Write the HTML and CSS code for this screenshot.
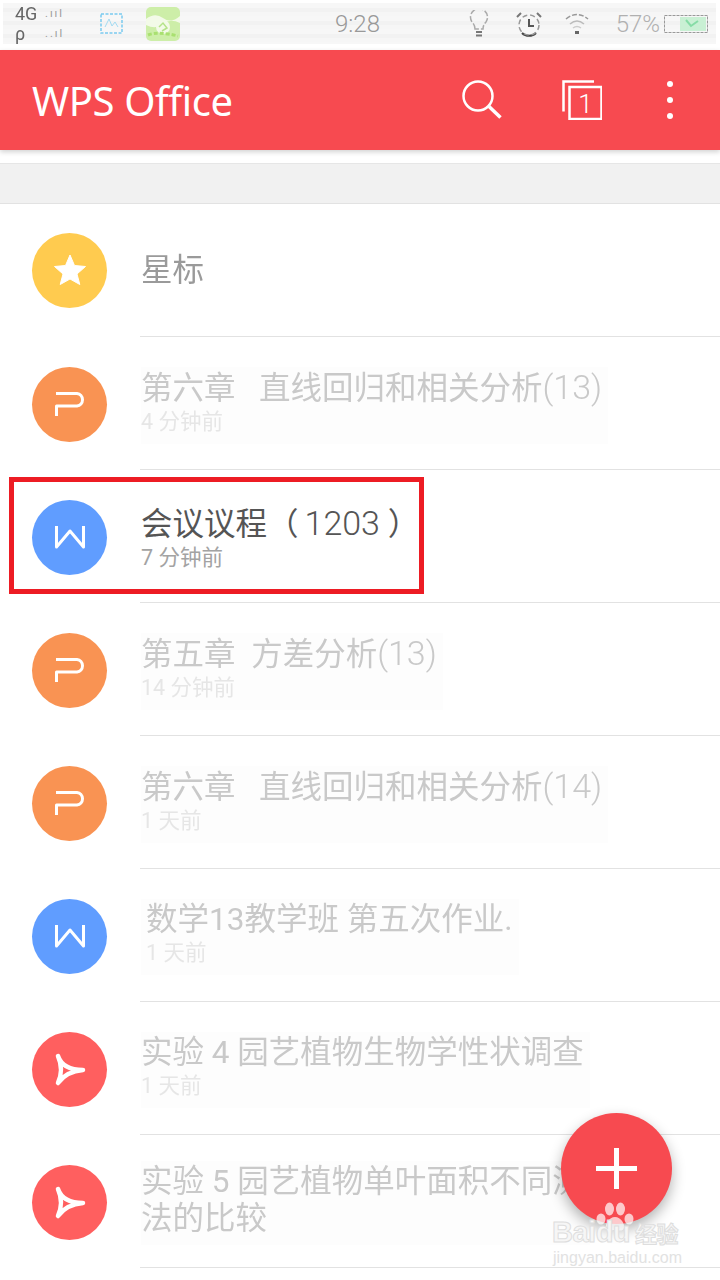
FILE: index.html
```html
<!DOCTYPE html>
<html lang="zh">
<head>
<meta charset="utf-8">
<title>WPS Office</title>
<link rel="stylesheet" href="styles.css">
</head>
<body>
<div class="phone">
  <div class="status">
    <div class="status-inner">
      <div class="signal">
        <div class="sig-line"><span class="sig-a">4G</span><span class="sig-b">.ııl</span></div>
        <div class="sig-line"><span class="sig-a">ρ</span><span class="sig-b">..ıl</span></div>
      </div>
      <svg class="st-pulse" width="24" height="24" viewBox="0 0 24 24"><rect x="1" y="2" width="21" height="19" fill="none" stroke="#6cc5ee" stroke-width="1.5" stroke-dasharray="3 1.5"/><path d="M5 15 L9 7 L12 14 L15 10 L18 15" fill="none" stroke="#9ad8f2" stroke-width="1"/></svg>
      <svg class="st-app" width="34" height="34" viewBox="0 0 34 34"><rect width="34" height="34" rx="5" fill="#cdeea8"/><path d="M0 12 Q9 5 17 11 T34 9 V16 Q24 11 17 17 T0 18Z" fill="#f3fae8"/><circle cx="17" cy="20" r="7" fill="#f3fae8"/><path d="M13 20 L17 16 L21 21 L16 24" fill="none" stroke="#b5e38a" stroke-width="1.5"/><path d="M2 28 Q12 24 32 29" fill="none" stroke="#a9e070" stroke-width="3" stroke-dasharray="4 2"/></svg>
      <span class="st-time">9:28</span>
      <div class="st-right">
        <svg width="22" height="28" viewBox="0 0 22 28"><path d="M7 19 Q7 15 4 12 A8.500 8.500 0 1 1 18 12 Q15 15 15 19 Z" fill="none" stroke="#aaa" stroke-width="1.500" stroke-dasharray="6 2"/><path d="M8 22 H14 M8 25.500 H14" stroke="#777" stroke-width="2"/></svg>
        <svg width="26" height="26" viewBox="0 0 26 26"><path d="M6 22 A10 10 0 0 0 20 22" fill="none" stroke="#444" stroke-width="2"/><circle cx="13" cy="14" r="10" fill="none" stroke="#999" stroke-width="1.500" stroke-dasharray="5 3"/><path d="M13 8 V15 H18" fill="none" stroke="#555" stroke-width="2"/><path d="M1 6 L5 2 M25 6 L21 2" stroke="#777" stroke-width="2"/></svg>
        <svg width="26" height="24" viewBox="0 0 26 24"><path d="M2 7 Q13 -2 24 7" fill="none" stroke="#999" stroke-width="1.500" stroke-dasharray="5 2"/><path d="M6 12 Q13 6 20 12" fill="none" stroke="#bbb" stroke-width="1.500"/><path d="M9 16 Q13 13 17 16" fill="none" stroke="#ccc" stroke-width="1.500"/><rect x="11" y="19" width="4" height="3" fill="#666"/></svg>
        <span class="st-pct">57%</span>
        <svg width="44" height="18" viewBox="0 0 44 18"><rect x=".5" y=".5" width="43" height="17" fill="none" stroke="#999" stroke-dasharray="3 1"/><rect x="16" y="2" width="26" height="14" fill="#c9f0d4"/><path d="M22 5 L27 11 L34 6" fill="none" stroke="#86dca6" stroke-width="2"/></svg>
      </div>
    </div>
  </div>

  <header class="appbar">
    <h1 class="app-title">WPS Office</h1>
    <svg class="ic-search" width="40" height="40" viewBox="0 0 40 40"><circle cx="16" cy="16" r="14.500" fill="none" stroke="#fff" stroke-width="2.500"/><path d="M27 26.500 L38.500 37.500" stroke="#fff" stroke-width="3.500"/></svg>
    <svg class="ic-tabs" width="40" height="40" viewBox="0 0 40 40"><path d="M1.500 31.500 V1.500 H32" fill="none" stroke="#fff" stroke-width="2.500"/><rect x="7.500" y="7" width="32" height="32" fill="none" stroke="#fff" stroke-width="2.500"/><text x="23.500" y="32.500" class="tab-count" text-anchor="middle">1</text></svg>
    <div class="ic-more"><span class="dot"></span><span class="dot"></span><span class="dot"></span></div>
  </header>

  <div class="gap"></div>
  <div class="band"></div>

  <ul class="list">
    <li class="row">
      <span class="avatar yellow"><svg width="75" height="75" viewBox="0 0 75 75"><path d="M38 22 L42.500 32.500 L53.500 33.500 L45 41 L47.800 51.500 L38 46 L28.200 51.500 L31 41 L22.500 33.500 L33.500 32.500 Z" fill="#fff" stroke="#fff" stroke-linejoin="round"/></svg></span>
      <div class="body"><div class="text star"><div class="title">星标</div></div></div>
    </li>
    <li class="row">
      <span class="avatar orange"><svg width="75" height="75" viewBox="0 0 75 75"><path class="glyph" d="M24 26.500 H45 A6.300 6.300 0 0 1 45 39 H24.500 V49"/></svg></span>
      <div class="body"><div class="text faded"><div class="title">第六章&nbsp;&nbsp;&nbsp;直线回归和相关分析<span class="thin">(13)</span></div><div class="sub">4 分钟前</div></div></div>
    </li>
    <li class="row">
      <span class="avatar blue"><svg width="75" height="75" viewBox="0 0 75 75"><path class="glyph" d="M24.500 26 V47 L38 31 L51.500 47 V26"/></svg></span>
      <div class="body"><div class="text"><div class="title">会议议程（<span class="thin code">1203</span> ）</div><div class="sub">7 分钟前</div></div></div>
      <div class="highlight"></div>
    </li>
    <li class="row">
      <span class="avatar orange"><svg width="75" height="75" viewBox="0 0 75 75"><path class="glyph" d="M24 26.500 H45 A6.300 6.300 0 0 1 45 39 H24.500 V49"/></svg></span>
      <div class="body"><div class="text faded"><div class="title">第五章&nbsp;&nbsp;方差分析<span class="thin">(13)</span></div><div class="sub">14 分钟前</div></div></div>
    </li>
    <li class="row">
      <span class="avatar orange"><svg width="75" height="75" viewBox="0 0 75 75"><path class="glyph" d="M24 26.500 H45 A6.300 6.300 0 0 1 45 39 H24.500 V49"/></svg></span>
      <div class="body"><div class="text faded"><div class="title">第六章&nbsp;&nbsp;&nbsp;直线回归和相关分析<span class="thin">(14)</span></div><div class="sub">1 天前</div></div></div>
    </li>
    <li class="row">
      <span class="avatar blue"><svg width="75" height="75" viewBox="0 0 75 75"><path class="glyph" d="M24.500 26 V47 L38 31 L51.500 47 V26"/></svg></span>
      <div class="body"><div class="text faded inset"><div class="title">数学13教学班 第五次作业.</div><div class="sub">1 天前</div></div></div>
    </li>
    <li class="row">
      <span class="avatar coral"><svg width="75" height="75" viewBox="0 0 75 75"><path class="glyph pdf" d="M26 24 C29 33 36 38 51 38 C38 39 31 44 26 51 C30 42 30 33 26 24 Z"/></svg></span>
      <div class="body"><div class="text faded"><div class="title">实验 4 园艺植物生物学性状调查</div><div class="sub">1 天前</div></div></div>
    </li>
    <li class="row">
      <span class="avatar coral"><svg width="75" height="75" viewBox="0 0 75 75"><path class="glyph pdf" d="M26 24 C29 33 36 38 51 38 C38 39 31 44 26 51 C30 42 30 33 26 24 Z"/></svg></span>
      <div class="body"><div class="text faded"><div class="title">实验 5 园艺植物单叶面积不同测</div><div class="title line2">法的比较</div></div></div>
    </li>
  </ul>

  <button class="fab" type="button" aria-label="新建"><span class="plus"></span></button>

  <div class="watermark">
    <svg class="paw" width="38" height="34" viewBox="0 0 38 34"><ellipse cx="5" cy="17" rx="4.500" ry="5.500"/><ellipse cx="13.500" cy="7" rx="4.500" ry="6.500"/><ellipse cx="24.500" cy="7" rx="4.500" ry="6.500"/><ellipse cx="33" cy="17" rx="4.500" ry="5.500"/><path d="M19 15 C25 15 29 22 28 26 C27 30 22 28 19 28 C16 28 11 30 10 26 C9 22 13 15 19 15Z"/></svg>
    <div class="wm-brand">Baidu<span class="wm-cn">经验</span></div>
    <div class="wm-url">jingyan.baidu.com</div>
  </div>
</div>
</body>
</html>
```

FILE: styles.css
```css
* { box-sizing: border-box; }
html, body { margin: 0; padding: 0; background: #fff; }
body { font-family: "Roboto", "Noto Sans CJK SC", sans-serif; }
.phone { position: relative; width: 720px; height: 1280px; overflow: hidden; background: #fff; }

/* status bar */
.status { height: 50px; padding: 3px 4px 6px 3px; background: #fff; }
.status-inner {
  height: 41px; display: flex; align-items: center; padding-left: 12px;
  background: repeating-linear-gradient(180deg, #f7f7f7 0 5px, #f2f2f2 5px 9px, #f6f6f6 9px 13px);
}
.signal { width: 85px; display: flex; flex-direction: column; gap: 1px; }
.sig-line { display: flex; align-items: center; height: 19px; gap: 6px; }
.sig-a { font-size: 18px; color: #666; width: 24px; filter: blur(.3px); }
.sig-b { font-size: 11px; color: #999; letter-spacing: 2px; }
.st-pulse { margin-right: 22px; opacity: .9; }
.st-app { margin-right: 155px; }
.st-time { font-size: 24px; font-weight: 300; color: #999; width: 50px; }
.st-right { margin-left: auto; display: flex; align-items: center; padding-right: 8px; }
.st-right svg:nth-child(1) { margin-right: 26px; }
.st-right svg:nth-child(2) { margin-right: 22px; }
.st-right svg:nth-child(3) { margin-right: 26px; }
.st-pct { font-size: 24px; font-weight: 300; color: #b0b0b0; margin-right: 4px; }

/* app bar */
.appbar {
  position: relative; z-index: 2;
  height: 100px; display: flex; align-items: center; padding-left: 32px;
  background: #f74a50; box-shadow: 0 2px 5px rgba(0, 0, 0, .18);
}
.app-title { flex: 1; margin: 0; font-family: "Noto Sans", sans-serif; font-size: 40px; font-weight: 400; color: #fff; letter-spacing: -.4px; }
.ic-search { margin-right: 60px; }
.ic-tabs { margin-right: 63px; }
.tab-count { font-family: "Roboto", sans-serif; font-size: 26px; font-weight: 300; fill: #fff; }
.ic-more { width: 10px; margin-right: 45px; display: flex; flex-direction: column; align-items: center; gap: 10px; }
.dot { width: 6px; height: 6px; border-radius: 50%; background: #fff; }

.gap { height: 13px; background: #fff; }
.band { height: 41px; background: #f1f1f1; border-top: 1px solid #e6e6e6; border-bottom: 1px solid #e2e2e2; }

/* list */
.list { list-style: none; margin: 0; padding: 0; }
.row { position: relative; height: 133px; display: flex; align-items: center; padding-left: 32px; }
.avatar { flex: none; width: 75px; height: 75px; border-radius: 50%; margin-top: 2px; }
.row:first-child .avatar { margin-top: 0; }
.avatar svg { display: block; }
.yellow { background: #ffcb4f; }
.orange { background: #f99353; }
.blue { background: #609dff; }
.coral { background: #ff5f5f; }
.glyph { fill: none; stroke: #fff; stroke-width: 3; stroke-linejoin: round; }
.pdf { stroke-width: 4.500; stroke-linecap: round; }

.body {
  flex: 1; align-self: stretch; margin-left: 33px; padding-left: 1px; padding-top: 4px;
  display: flex; align-items: center;
  border-bottom: 1px solid #e2e2e2;
}
.row:first-child .body { padding-top: 0; }
.text { min-width: 0; }
.title { font-size: 31.500px; line-height: 37px; color: #555; white-space: nowrap; }
.thin { font-size: 34px; font-weight: 300; }
.code { margin-left: 6px; }
.sub { margin-top: 1px; font-size: 21.500px; line-height: 28px; color: #a3a3a3; white-space: nowrap; }

.star .title { color: #9a9a9a; filter: blur(.5px); }
.faded { background: #fdfdfd; padding: 2px 6px 8px 0; }
.faded .title { color: #c9c9c9; filter: blur(.4px); }
.faded .sub { color: #e6e6e6; filter: blur(.5px); }
.inset { padding-left: 5px; }
.line2 { width: fit-content; }

.highlight {
  position: absolute; left: 9px; top: 7px; width: 415px; height: 117px;
  border: 5px solid #ed1c24;
}

/* floating button */
.fab {
  position: absolute; left: 561px; top: 1113px; width: 111px; height: 111px;
  padding: 0; border: 0; border-radius: 50%; background: #f74a50;
  box-shadow: 0 6px 14px rgba(0, 0, 0, .3);
}
.plus { position: absolute; left: 35px; top: 35px; width: 41px; height: 41px;
  background:
    linear-gradient(#fff, #fff) center / 41px 5px no-repeat,
    linear-gradient(#fff, #fff) center / 5px 41px no-repeat;
}

/* watermark */
.watermark { position: absolute; left: 552px; top: 1202px; width: 130px; height: 66px; text-align: left; }
.paw { position: absolute; left: 44px; top: 0; fill: rgba(255, 255, 255, .7); }
.wm-brand {
  position: absolute; left: 0; top: 15px; font-family: "Liberation Sans", sans-serif; font-size: 29px; line-height: 30px;
  font-weight: 700; color: #f6f6f6; -webkit-text-stroke: 1px #dedede; white-space: nowrap; letter-spacing: -.5px;
}
.wm-cn { font-family: "Noto Sans CJK SC", sans-serif; font-size: 22px; margin-left: 5px; }
.wm-url { position: absolute; left: 1px; top: 46px; font-family: "Liberation Sans", sans-serif; font-size: 16px; line-height: 20px; color: #e2e2e2; white-space: nowrap; }
```
